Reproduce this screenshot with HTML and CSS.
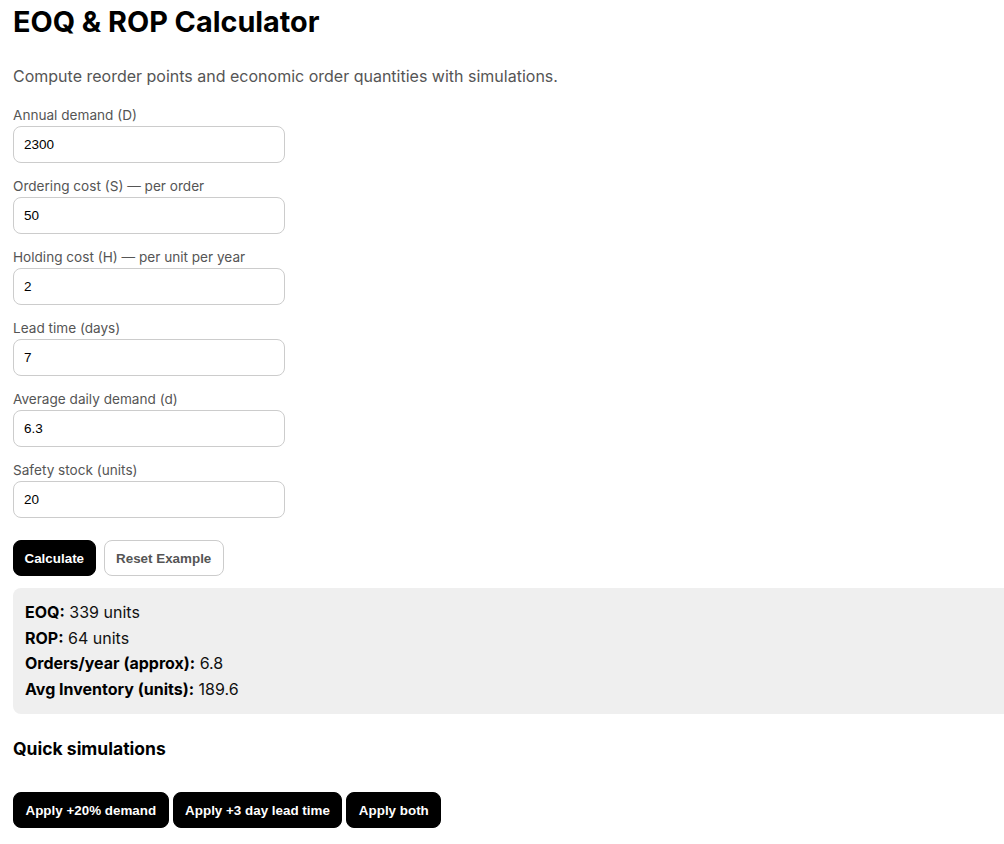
FILE: index.html
```html
<!DOCTYPE html>
<html lang="en">
<head>
    <meta charset="UTF-8">
    <meta name="viewport" content="width=device-width, initial-scale=1.0">
    <title>EOQ &amp; ROP Calculator</title>
    <link rel="stylesheet" href="styles.css">
</head>
<body>
    <h1>EOQ &amp; ROP Calculator</h1>
    <p class="lead">Compute reorder points and economic order quantities with simulations.</p>

    <div class="form">
        <label class="field">Annual demand (D)
            <input type="text" id="demand" value="2300">
        </label>
        <label class="field">Ordering cost (S) — per order
            <input type="text" id="order-cost" value="50">
        </label>
        <label class="field">Holding cost (H) — per unit per year
            <input type="text" id="holding-cost" value="2">
        </label>
        <label class="field">Lead time (days)
            <input type="text" id="lead-time" value="7">
        </label>
        <label class="field">Average daily demand (d)
            <input type="text" id="daily-demand" value="6.3">
        </label>
        <label class="field">Safety stock (units)
            <input type="text" id="safety" value="20">
        </label>
    </div>

    <div class="actions">
        <button class="btn">Calculate</button>
        <button class="btn btn-light">Reset Example</button>
    </div>

    <div class="results">
        <div><strong>EOQ:</strong> 339 units</div>
        <div><strong>ROP:</strong> 64 units</div>
        <div><strong>Orders/year (approx):</strong> 6.8</div>
        <div><strong>Avg Inventory (units):</strong> 189.6</div>
    </div>

    <h3>Quick simulations</h3>
    <div class="sims">
        <button class="btn">Apply +20% demand</button>
        <button class="btn">Apply +3 day lead time</button>
        <button class="btn">Apply both</button>
    </div>
</body>
</html>
```

FILE: styles.css
```css
html {
    overflow-x: hidden;
}

body {
    margin: 0;
    padding: 0 13px;
    font-family: Inter, "Noto Sans", sans-serif;
    color: #111;
    background: #fff;
}

h1 {
    font-size: 28.8px;
    font-weight: 700;
    color: #000;
    margin: 4px 0 0;
    line-height: 36px;
}

.lead {
    font-size: 16px;
    color: #555;
    margin: 26px 0 21px;
}

.form {
    display: flex;
    flex-direction: column;
    gap: 15px;
}

.field {
    display: flex;
    flex-direction: column;
    gap: 2px;
    font-size: 13.6px;
    line-height: 17px;
    color: #555;
    width: 272px;
}

.field input {
    box-sizing: border-box;
    width: 272px;
    height: 37px;
    padding: 0 10px;
    border: 1px solid #ccc;
    border-radius: 8px;
    font-family: "Liberation Sans", Arial, sans-serif;
    font-size: 13.5px;
    color: #000;
}

.actions {
    display: flex;
    gap: 8px;
    margin-top: 22px;
}

.btn {
    background: #000;
    color: #fff;
    border: 1px solid #000;
    border-radius: 8px;
    height: 36px;
    padding: 0 11px;
    font-family: "Liberation Sans", Arial, sans-serif;
    font-size: 13.4px;
    font-weight: 700;
    cursor: pointer;
}

.btn-light {
    background: #fff;
    color: #555;
    border-color: #ccc;
    padding: 0 12px;
}

.actions .btn {
    padding: 0 10.5px;
}

.actions .btn-light {
    padding: 0 11.5px;
}

.results {
    margin-top: 12px;
    width: 1100px;
    background: #efefef;
    border-radius: 8px;
    padding: 12px;
    font-size: 16px;
    line-height: 25.6px;
}

.results strong {
    color: #000;
}

h3 {
    font-size: 17.5px;
    font-weight: 700;
    color: #000;
    margin: 24px 0 33px;
}

.sims {
    display: flex;
    gap: 4px;
}

.sims .btn {
    padding: 0 11.5px;
}
```
